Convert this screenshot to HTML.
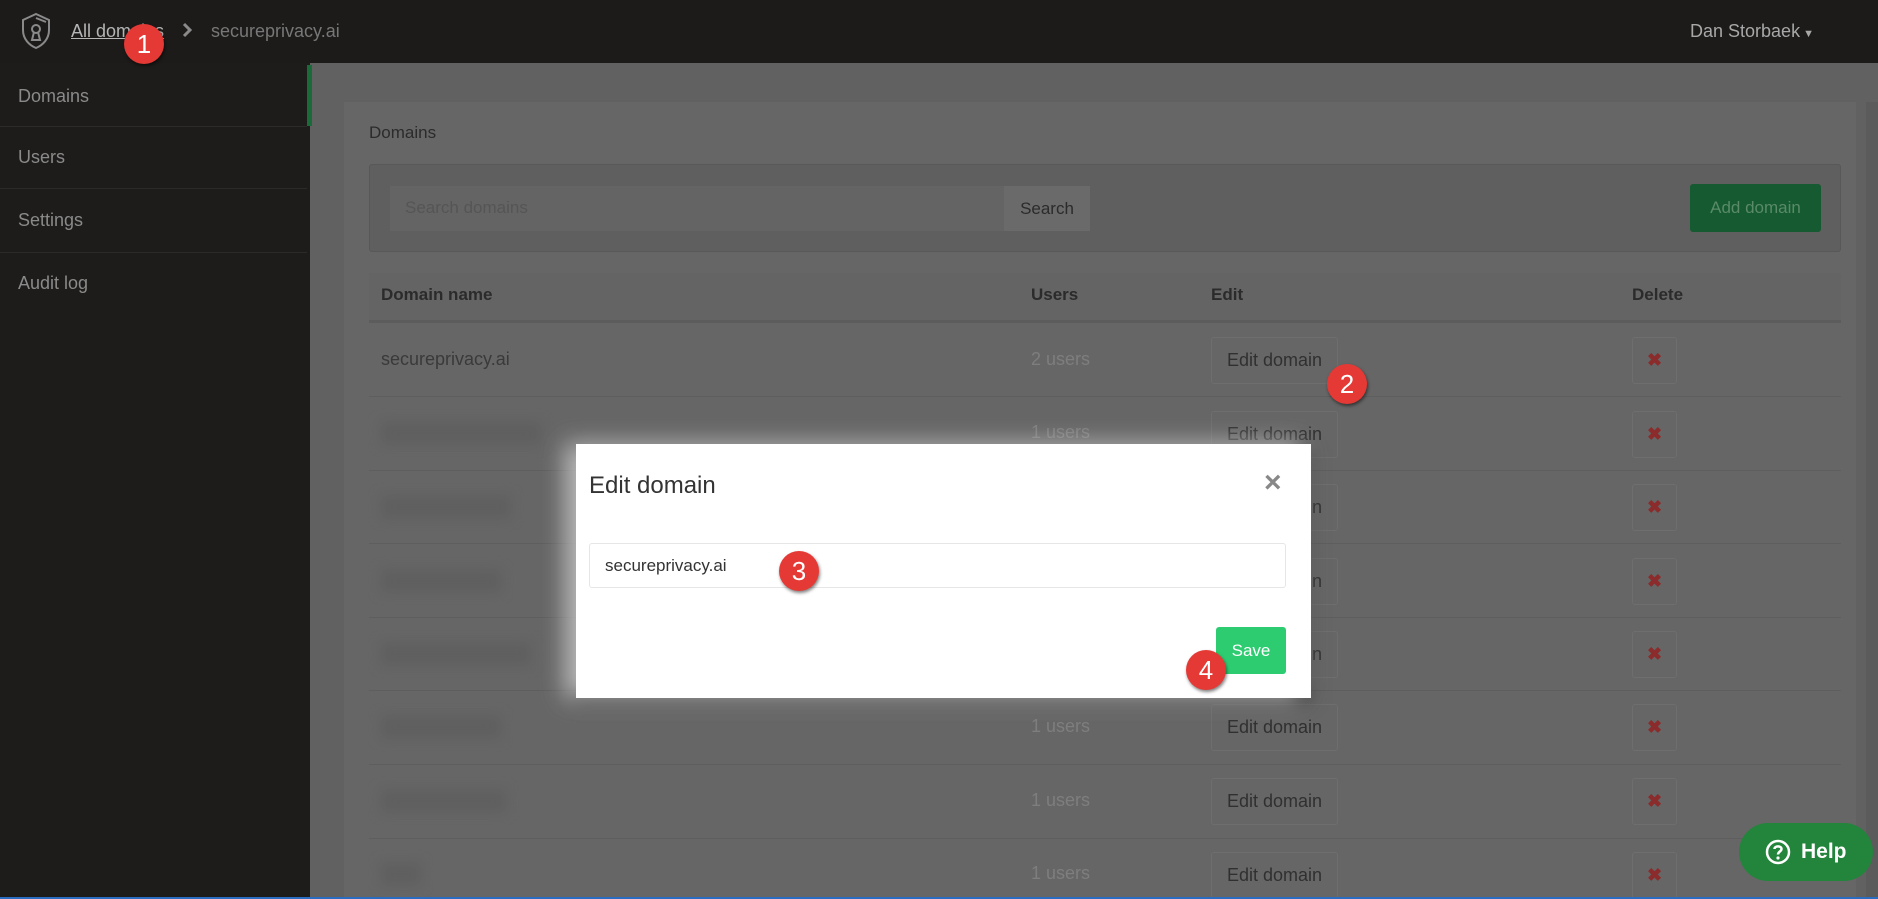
<!DOCTYPE html>
<html><head><meta charset="utf-8"><style>
*{box-sizing:border-box;margin:0;padding:0}
body{width:1878px;height:899px;overflow:hidden;background:#616161;font-family:"Liberation Sans",sans-serif;position:relative}
.abs{position:absolute}
.hdr{left:0;top:0;width:1878px;height:63px;background:#1c1b1a}
.side{left:0;top:63px;width:310px;height:836px;background:#1d1c1b}
.si{position:absolute;left:18px;color:#8a8a8a;font-size:18px}
.sep{position:absolute;left:0;width:307px;height:1px;background:#2b2a29}
.panel{left:344px;top:102px;width:1512px;height:797px;background:#666}
.t{position:absolute;font-size:18px}
.dark{color:#2b2b2b}
.mut{color:#7e7e7e}
.row{position:absolute;left:369px;width:1472px;height:1px;background:#5e5e5e}
.eb{position:absolute;left:1211px;width:127px;height:47px;border:1px solid #6e6e6e;background:#666;color:#303030;font-size:18px;text-align:center;line-height:45px;border-radius:3px}
.db{position:absolute;left:1632px;width:45px;height:47px;border:1px solid #6e6e6e;border-radius:3px;color:#8b2b2b;font-size:18px;font-weight:bold;text-align:center;line-height:45px}
.blur{position:absolute;left:381px;height:22px;background:#5f5f5f;filter:blur(6px)}
.badge{position:absolute;width:40px;height:40px;border-radius:50%;background:#e53935;color:#fff;font-size:26px;text-align:center;line-height:40px;box-shadow:1px 2px 3px rgba(0,0,0,.5)}
</style></head><body>
<div class="abs hdr"></div>
<svg class="abs" style="left:20px;top:12px" width="32" height="38" viewBox="0 0 32 38" fill="none" stroke="#8a8a8a" stroke-width="2"><path d="M16 2 L29 8 V18 C29 27 23 33 16 36 C9 33 3 27 3 18 V8 Z"/><path d="M16 6 L26 10"/><circle cx="16" cy="17" r="4"/><path d="M14 20 L12 28 H20 L18 20"/></svg>
<div class="t" style="left:71px;top:21px;color:#b5b5b5;text-decoration:underline;font-size:18px">All domains</div>
<svg class="abs" style="left:181px;top:21px" width="12" height="18" viewBox="0 0 12 18"><path d="M3 3 L9 9 L3 15" stroke="#8a8a8a" stroke-width="3" fill="none"/></svg>
<div class="t" style="left:211px;top:21px;color:#777">secureprivacy.ai</div>
<div class="t" style="left:1690px;top:21px;color:#a8a8a8">Dan Storbaek<span style="font-size:11px"> ▼</span></div>
<div class="abs side"></div>
<div class="abs" style="left:307px;top:65px;width:5px;height:61px;background:#1b6a3a"></div>
<div class="si" style="top:86px">Domains</div><div class="sep" style="top:126px"></div>
<div class="si" style="top:147px">Users</div><div class="sep" style="top:188px"></div>
<div class="si" style="top:210px">Settings</div><div class="sep" style="top:252px"></div>
<div class="si" style="top:273px">Audit log</div>
<div class="abs panel"></div>
<div class="abs" style="left:1866px;top:102px;width:12px;height:797px;background:#5b5b5b"></div>
<div class="t dark" style="left:369px;top:123px;font-size:17px">Domains</div>
<div class="abs" style="left:369px;top:164px;width:1472px;height:88px;background:#5f5f5f;border:1px solid #585858;border-radius:3px"></div>
<div class="abs" style="left:390px;top:186px;width:614px;height:45px;background:#646464"></div>
<div class="t" style="left:405px;top:198px;color:#555;font-size:17px">Search domains</div>
<div class="abs" style="left:1004px;top:186px;width:86px;height:45px;background:#6a6a6a;color:#2b2b2b;font-size:17px;text-align:center;line-height:45px">Search</div>
<div class="abs" style="left:1690px;top:184px;width:131px;height:48px;background:#155a30;border-radius:3px;color:#5a8a68;font-size:17px;text-align:center;line-height:48px">Add domain</div>
<div class="abs" style="left:369px;top:273px;width:1472px;height:48px;background:#646464"></div>
<div class="abs" style="left:369px;top:320px;width:1472px;height:3px;background:#5c5c5c"></div>
<div class="t dark" style="left:381px;top:285px;font-weight:bold;font-size:17px">Domain name</div>
<div class="t dark" style="left:1031px;top:285px;font-weight:bold;font-size:17px">Users</div>
<div class="t dark" style="left:1211px;top:285px;font-weight:bold;font-size:17px">Edit</div>
<div class="t dark" style="left:1632px;top:285px;font-weight:bold;font-size:17px">Delete</div>
<div class="t" style="left:381px;top:349px;color:#3a3a3a">secureprivacy.ai</div>
<div class="t mut" style="left:1031px;top:349px">2 users</div>
<div class="eb" style="top:337px">Edit domain</div><div class="db" style="top:337px">✖</div>
<div class="row" style="top:396px"></div>
<div class="blur" style="top:422px;width:160px"></div>
<div class="t mut" style="left:1031px;top:422px">1 users</div>
<div class="eb" style="top:411px">Edit domain</div><div class="db" style="top:411px">✖</div>
<div class="row" style="top:470px"></div>
<div class="blur" style="top:496px;width:130px"></div>
<div class="eb" style="top:484px">Edit domain</div><div class="db" style="top:484px">✖</div>
<div class="row" style="top:543px"></div>
<div class="blur" style="top:570px;width:120px"></div>
<div class="eb" style="top:558px">Edit domain</div><div class="db" style="top:558px">✖</div>
<div class="row" style="top:617px"></div>
<div class="blur" style="top:643px;width:150px"></div>
<div class="eb" style="top:631px">Edit domain</div><div class="db" style="top:631px">✖</div>
<div class="row" style="top:690px"></div>
<div class="blur" style="top:716px;width:120px"></div>
<div class="t mut" style="left:1031px;top:716px">1 users</div>
<div class="eb" style="top:704px">Edit domain</div><div class="db" style="top:704px">✖</div>
<div class="row" style="top:764px"></div>
<div class="blur" style="top:790px;width:125px"></div>
<div class="t mut" style="left:1031px;top:790px">1 users</div>
<div class="eb" style="top:778px">Edit domain</div><div class="db" style="top:778px">✖</div>
<div class="row" style="top:838px"></div>
<div class="blur" style="top:863px;width:40px"></div>
<div class="t mut" style="left:1031px;top:863px">1 users</div>
<div class="eb" style="top:852px">Edit domain</div><div class="db" style="top:852px">✖</div>
<div class="abs" style="left:576px;top:444px;width:735px;height:254px;background:#fff;box-shadow:-10px 0 22px rgba(215,215,215,.85),0 5px 15px rgba(0,0,0,.5)"></div>
<div class="t" style="left:589px;top:472px;font-size:24px;color:#333">Edit domain</div>
<div class="t" style="left:1264px;top:466px;font-size:30px;color:#888;font-weight:bold">×</div>
<div class="abs" style="left:589px;top:543px;width:697px;height:45px;border:1px solid #e6e6e6;border-radius:3px"></div>
<div class="t" style="left:605px;top:556px;color:#333;font-size:17px">secureprivacy.ai</div>
<div class="abs" style="left:1216px;top:627px;width:70px;height:47px;background:#2ecc71;border-radius:3px;color:#fff;font-size:17px;text-align:center;line-height:47px">Save</div>
<div class="badge" style="left:124px;top:24px">1</div>
<div class="badge" style="left:1327px;top:364px">2</div>
<div class="badge" style="left:779px;top:551px">3</div>
<div class="badge" style="left:1186px;top:650px">4</div>
<div class="abs" style="left:1739px;top:823px;width:134px;height:58px;border-radius:29px;background:#23843c;color:#fff;font-weight:bold;font-size:21px;display:flex;align-items:center;padding-left:26px"><svg width="26" height="26" viewBox="0 0 26 26" style="margin-right:10px"><circle cx="13" cy="13" r="11" stroke="#fff" stroke-width="2.5" fill="none"/><path d="M9.5 10 C9.5 6.5 16.5 6.5 16.5 10 C16.5 12.5 13 12.5 13 15.5" stroke="#fff" stroke-width="2.5" fill="none"/><circle cx="13" cy="19" r="1.6" fill="#fff"/></svg>Help</div>
<div class="abs" style="left:0;top:897px;width:1878px;height:2px;background:#2a6cc0"></div>
</body></html>
